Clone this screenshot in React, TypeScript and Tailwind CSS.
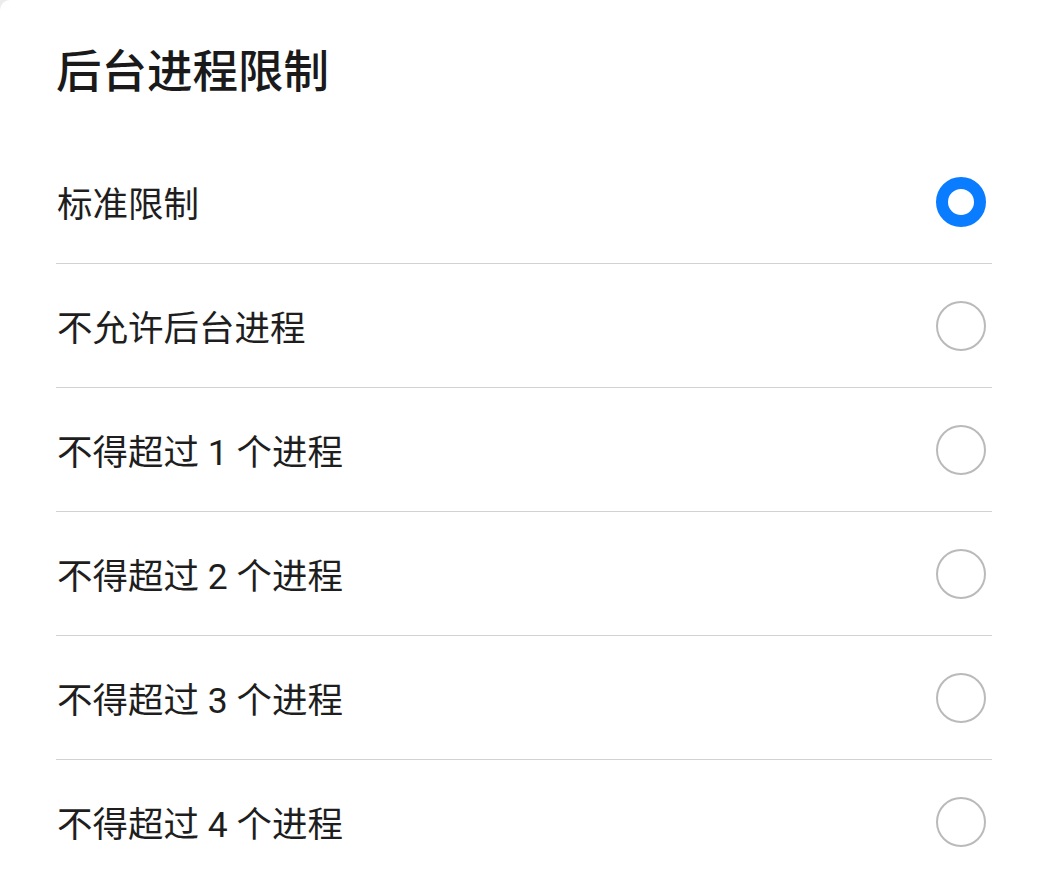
import React, { useState } from 'react';

const options = [
  '标准限制',
  '不允许后台进程',
  '不得超过 1 个进程',
  '不得超过 2 个进程',
  '不得超过 3 个进程',
  '不得超过 4 个进程',
];

const Radio: React.FC<{ checked: boolean }> = ({ checked }) =>
  checked ? (
    <span className="block w-[50px] h-[50px] rounded-full border-[12px] border-[#0a7cff] bg-white" />
  ) : (
    <span className="block w-[50px] h-[50px] rounded-full border-[2.5px] border-[#bababa] bg-white" />
  );

const App: React.FC = () => {
  const [selected, setSelected] = useState(0);

  return (
    <div className="w-[1041px] h-[888px] bg-[#ececec] overflow-hidden">
      <div
        className="w-full h-full bg-white rounded-tl-[10px] text-[#1a1a1a]"
        style={{ fontFamily: 'Roboto, "Noto Sans CJK SC", sans-serif' }}
      >
        {/* Title */}
        <div className="h-[140px] flex items-center pl-[56px]">
          <h1 className="text-[45.5px] leading-none font-medium pt-[6px]">后台进程限制</h1>
        </div>

        {/* Options */}
        <div className="ml-[56px] mr-[49px]">
          {options.map((label, i) => (
            <button
              key={label}
              onClick={() => setSelected(i)}
              className={`w-full h-[124px] flex items-center justify-between pr-[6px] text-left ${
                i < options.length - 1 ? 'border-b border-[#d2d2d2]' : ''
              }`}
            >
              <span className="text-[35.5px] leading-none text-[#1e1e1e] pl-[1px] pt-[8px]">{label}</span>
              <Radio checked={selected === i} />
            </button>
          ))}
        </div>
      </div>
    </div>
  );
};

export default App;
